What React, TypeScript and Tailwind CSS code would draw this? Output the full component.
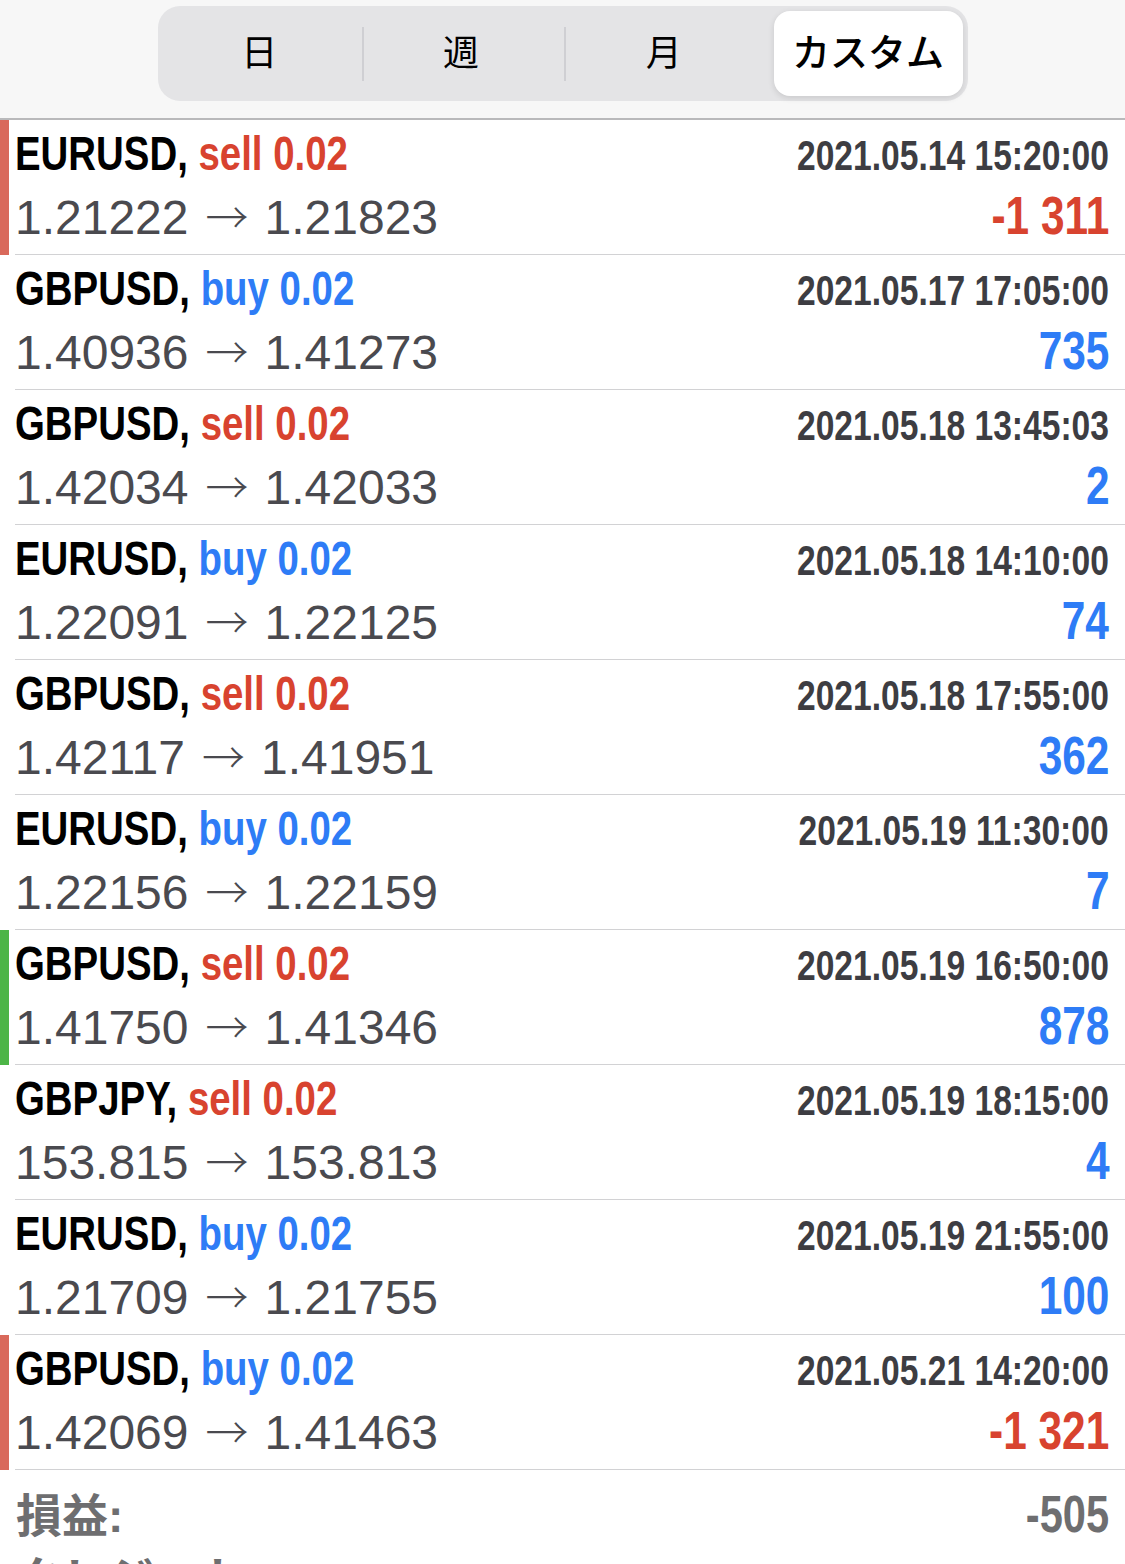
import React from 'react';

type Trade = {
  symbol: string;
  side: 'buy' | 'sell';
  open: string;
  close: string;
  time: string;
  profit: string;
  bar?: 'red' | 'green';
};

const trades: Trade[] = [
  { symbol: 'EURUSD', side: 'sell', open: '1.21222', close: '1.21823', time: '2021.05.14 15:20:00', profit: '-1 311', bar: 'red' },
  { symbol: 'GBPUSD', side: 'buy', open: '1.40936', close: '1.41273', time: '2021.05.17 17:05:00', profit: '735' },
  { symbol: 'GBPUSD', side: 'sell', open: '1.42034', close: '1.42033', time: '2021.05.18 13:45:03', profit: '2' },
  { symbol: 'EURUSD', side: 'buy', open: '1.22091', close: '1.22125', time: '2021.05.18 14:10:00', profit: '74' },
  { symbol: 'GBPUSD', side: 'sell', open: '1.42117', close: '1.41951', time: '2021.05.18 17:55:00', profit: '362' },
  { symbol: 'EURUSD', side: 'buy', open: '1.22156', close: '1.22159', time: '2021.05.19 11:30:00', profit: '7' },
  { symbol: 'GBPUSD', side: 'sell', open: '1.41750', close: '1.41346', time: '2021.05.19 16:50:00', profit: '878', bar: 'green' },
  { symbol: 'GBPJPY', side: 'sell', open: '153.815', close: '153.813', time: '2021.05.19 18:15:00', profit: '4' },
  { symbol: 'EURUSD', side: 'buy', open: '1.21709', close: '1.21755', time: '2021.05.19 21:55:00', profit: '100' },
  { symbol: 'GBPUSD', side: 'buy', open: '1.42069', close: '1.41463', time: '2021.05.21 14:20:00', profit: '-1 321', bar: 'red' },
];

const SegmentedControl = () => {
  const items = ['日', '週', '月'];
  return (
    <div className="flex h-[95px] w-[810px] items-center rounded-[22px] bg-[#e4e4e6] p-[5px]">
      {items.map((label, i) => (
        <div key={label} className="flex h-full flex-1 items-center">
          <div className="flex flex-1 items-center justify-center pr-[6px] text-[36px] text-black">{label}</div>
          {i < 2 && <div className="h-[54px] w-[2px] bg-[#cfcfd3]" />}
        </div>
      ))}
      <div className="ml-[6px] flex h-full w-[189px] items-center justify-center rounded-[16px] bg-white text-[38px] font-medium text-black shadow-[0_2px_6px_rgba(0,0,0,0.12)]">
        カスタム
      </div>
    </div>
  );
};

const TradeRow = ({ t }: { t: Trade }) => {
  const sideColor = t.side === 'sell' ? 'text-[#d8432f]' : 'text-[#2e7cf6]';
  const profitColor = t.profit.startsWith('-') ? 'text-[#d8432f]' : 'text-[#2e7cf6]';
  const barColor = t.bar === 'red' ? 'bg-[#d9695b]' : t.bar === 'green' ? 'bg-[#4db547]' : 'bg-transparent';

  return (
    <div className="flex">
      <div className={`w-[9px] ${barColor}`} />
      <div className="ml-[6px] flex h-[135px] flex-1 flex-col border-b border-[#d2d2d4] pr-[16px] pt-[6px]">
        <div className="flex h-[56px] items-baseline justify-between">
          <span className="inline-block origin-left scale-x-80 whitespace-nowrap text-[48px] font-bold leading-[56px] text-black">
            {t.symbol}, <span className={sideColor}>{t.side} 0.02</span>
          </span>
          <span className="inline-block origin-right scale-x-80 whitespace-nowrap text-[42px] font-bold leading-[56px] text-[#3d3d42]">
            {t.time}
          </span>
        </div>
        <div className="mt-[5px] flex h-[56px] items-baseline justify-between">
          <span className="whitespace-nowrap text-[48px] leading-[56px] text-[#4a4a4f]">
            {t.open}
            <span className="ml-[17px] mr-[16px] font-['Noto_Sans_CJK_JP'] text-[43px] font-light">→</span>
            {t.close}
          </span>
          <span className={`inline-block origin-right scale-x-80 whitespace-nowrap text-[53px] font-bold leading-[56px] ${profitColor}`}>
            {t.profit}
          </span>
        </div>
      </div>
    </div>
  );
};

export default function App() {
  return (
    <div className="h-[1564px] overflow-hidden bg-white font-['Liberation_Sans','Noto_Sans_CJK_JP',sans-serif]">
      <header className="box-border flex h-[120px] justify-center border-b-2 border-[#b9b9bb] bg-[#f7f7f7] pt-[6px]">
        <SegmentedControl />
      </header>
      {trades.map((t, i) => (
        <TradeRow key={i} t={t} />
      ))}
      <div className="pl-[16px] pr-[16px] pt-[14px]">
        <div className="flex items-baseline justify-between">
          <span className="text-[46px] font-bold leading-[60px] text-[#6e6e70]">損益:</span>
          <span className="inline-block origin-right scale-x-80 text-[52px] font-bold leading-[60px] text-[#6e6e70]">-505</span>
        </div>
        <div className="mt-[3px] flex items-baseline">
          <span className="text-[46px] font-bold leading-[60px] text-[#6e6e70]">クレジット:</span>
        </div>
      </div>
    </div>
  );
}
